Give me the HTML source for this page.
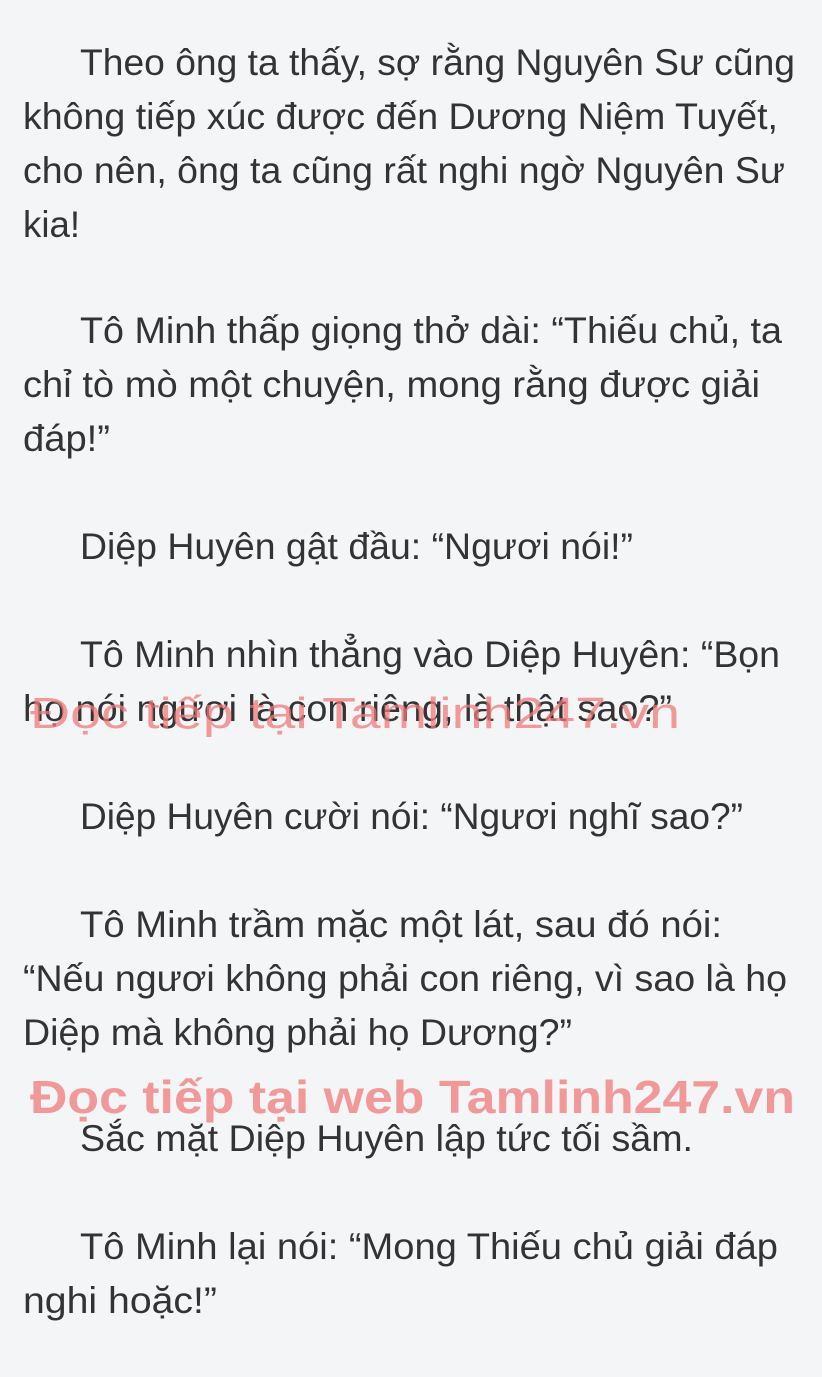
<!DOCTYPE html>
<html><head><meta charset="utf-8"><style>
html,body{margin:0;padding:0;background:#f4f5f7;}
svg{display:block}
text{font-family:"Liberation Sans",sans-serif;}
.t{font-size:37px;fill:#333333;}
.w{fill:#f07878;fill-opacity:0.75;}
</style></head><body>
<svg width="822" height="1377" viewBox="0 0 822 1377" xmlns="http://www.w3.org/2000/svg">
<rect width="822" height="1377" fill="#f4f5f7"/>
<g class="t">
<text x="80" y="75" textLength="715" lengthAdjust="spacingAndGlyphs">Theo ông ta thấy, sợ rằng Nguyên Sư cũng</text>
<text x="23" y="129" textLength="755" lengthAdjust="spacingAndGlyphs">không tiếp xúc được đến Dương Niệm Tuyết,</text>
<text x="23" y="183" textLength="762" lengthAdjust="spacingAndGlyphs">cho nên, ông ta cũng rất nghi ngờ Nguyên Sư</text>
<text x="23" y="237" textLength="57" lengthAdjust="spacingAndGlyphs">kia!</text>
<text x="80" y="343" textLength="702" lengthAdjust="spacingAndGlyphs">Tô Minh thấp giọng thở dài: “Thiếu chủ, ta</text>
<text x="23" y="397" textLength="737" lengthAdjust="spacingAndGlyphs">chỉ tò mò một chuyện, mong rằng được giải</text>
<text x="23" y="451" textLength="87" lengthAdjust="spacingAndGlyphs">đáp!”</text>
<text x="80" y="559" textLength="553" lengthAdjust="spacingAndGlyphs">Diệp Huyên gật đầu: “Ngươi nói!”</text>
<text x="80" y="667" textLength="700" lengthAdjust="spacingAndGlyphs">Tô Minh nhìn thẳng vào Diệp Huyên: “Bọn</text>
<text x="23" y="721" textLength="649" lengthAdjust="spacingAndGlyphs">họ nói ngươi là con riêng, là thật sao?”</text>
<text x="80" y="829" textLength="663" lengthAdjust="spacingAndGlyphs">Diệp Huyên cười nói: “Ngươi nghĩ sao?”</text>
<text x="80" y="937" textLength="642" lengthAdjust="spacingAndGlyphs">Tô Minh trầm mặc một lát, sau đó nói:</text>
<text x="23" y="991" textLength="764" lengthAdjust="spacingAndGlyphs">“Nếu ngươi không phải con riêng, vì sao là họ</text>
<text x="23" y="1045" textLength="549" lengthAdjust="spacingAndGlyphs">Diệp mà không phải họ Dương?”</text>
<text x="80" y="1151" textLength="613" lengthAdjust="spacingAndGlyphs">Sắc mặt Diệp Huyên lập tức tối sầm.</text>
<text x="80" y="1259" textLength="698" lengthAdjust="spacingAndGlyphs">Tô Minh lại nói: “Mong Thiếu chủ giải đáp</text>
<text x="23" y="1313" textLength="194" lengthAdjust="spacingAndGlyphs">nghi hoặc!”</text>
</g>
<text class="w" x="30" y="728" font-size="44" textLength="650" lengthAdjust="spacingAndGlyphs">Đọc tiếp tại Tamlinh247.vn</text>
<text class="w" x="30" y="1113" font-size="46" font-weight="bold" textLength="765" lengthAdjust="spacingAndGlyphs">Đọc tiếp tại web Tamlinh247.vn</text>
</svg>
</body></html>
